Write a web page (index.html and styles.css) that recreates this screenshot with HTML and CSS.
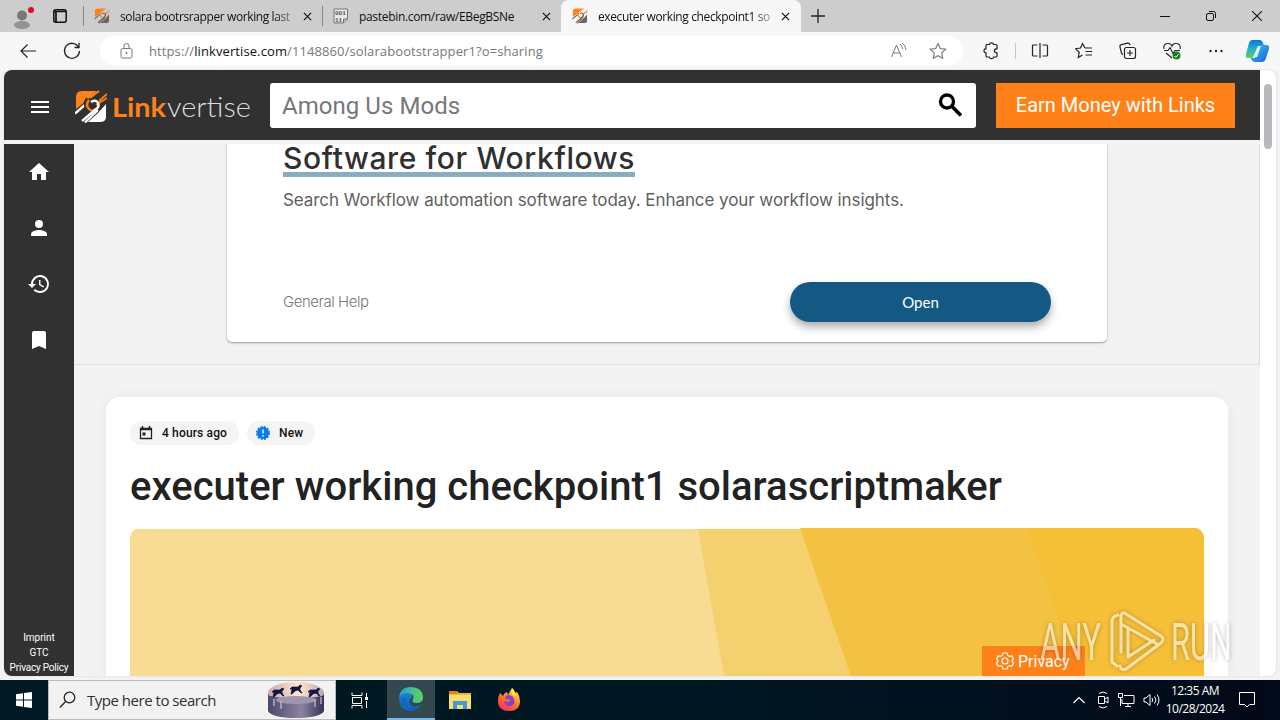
FILE: index.html
```html
<!DOCTYPE html>
<html lang="en">
<head>
    <meta charset="UTF-8">
    <meta name="viewport" content="width=device-width, initial-scale=1.0">
    <title>executer working checkpoint1 solarascriptmaker</title>
    <link rel="stylesheet" href="styles.css">
</head>
<body>
    <svg class="defs" width="0" height="0">
        <symbol id="mark" viewBox="0 0 32 34">
            <path d="M1 7Q1 1 7 1H22L11 11 1 19z" fill="#ff8119"/>
            <path d="M31 14V27Q31 32 25 32H13L23 23z" fill="var(--mark-light)"/>
            <path d="M0 23.500L12 13M10 32.500L23 20" stroke="var(--mark-light)" stroke-width="2.400" fill="none"/>
            <path d="M15 8L24 1M24 11L32 4M21 15L32 8" stroke="#ff8119" stroke-width="1.800"/>
            <path d="M13 9q-4 5 0 9t8-1" stroke="var(--mark-dark)" stroke-width="4.500" fill="none"/>
            <path d="M14 10q-4 5 0 9t7-1" stroke="#ff8119" stroke-width="2.400" fill="none"/>
            <path d="M16 12q5-3 7 1t-3 7l-13 11" stroke="var(--mark-light)" stroke-width="2.400" fill="none"/>
        </symbol>
        <symbol id="close" viewBox="0 0 10 10"><path d="M1 1l8 8M9 1L1 9" stroke="#111" stroke-width="1.3"/></symbol>
    </svg>

    <header class="tabs">
        <div class="profile">
            <svg width="24" height="24" viewBox="0 0 24 24"><circle cx="10" cy="9.500" r="5" fill="#777"/><ellipse cx="10" cy="19" rx="8" ry="4" fill="#929292"/><circle cx="19" cy="4" r="3" fill="#e00b1c"/></svg>
        </div>
        <svg class="workspaces" width="14" height="14" viewBox="0 0 14 14"><rect x=".8" y=".8" width="12.4" height="12.4" rx="2" fill="none" stroke="#111" stroke-width="1.5"/><path d="M1 2.500h12M3 3v10" stroke="#111" stroke-width="1.700"/></svg>
        <div class="tab tab-first">
            <svg class="favicon"><use href="#mark"/></svg>
            <span class="tab-title t1">solara bootrsrapper working last</span>
            <svg class="close"><use href="#close"/></svg>
        </div>
        <div class="tab tab-second">
            <svg class="favicon" viewBox="0 0 16 16"><path d="M1 1h13.500v10l-4 4H1z" fill="#e8e8e8" stroke="#777"/><text x="2" y="7" class="bits">001</text><text x="2" y="13.500" class="bits">11</text><path d="M10.500 15v-4h4" fill="#bbb" stroke="#777"/></svg>
            <span class="tab-title t2">pastebin.com/raw/EBegBSNe</span>
            <svg class="close"><use href="#close"/></svg>
        </div>
        <div class="tab tab-active">
            <svg class="favicon"><use href="#mark"/></svg>
            <span class="tab-title t3">executer working checkpoint1 so</span>
            <svg class="close"><use href="#close"/></svg>
        </div>
        <svg class="new-tab" width="14" height="14"><path d="M7 0v14M0 7h14" stroke="#222" stroke-width="1.3"/></svg>
        <div class="window-buttons">
            <svg width="10" height="10"><path d="M0 5.500h10" stroke="#111"/></svg>
            <svg width="10" height="10"><rect x=".5" y="2.500" width="7" height="7" rx="1.500" fill="none" stroke="#111"/><path d="M3 .5h4.500q2 0 2 2V7" fill="none" stroke="#111"/></svg>
            <svg width="10" height="10"><path d="M0 0l10 10M10 0L0 10" stroke="#111" stroke-width="1.100"/></svg>
        </div>
    </header>

    <nav class="toolbar">
        <svg class="back" width="16" height="16"><path d="M16 8H1M7.500 1.500L1 8l6.500 6.500" fill="none" stroke="#222" stroke-width="1.200"/></svg>
        <svg class="reload" width="18" height="18"><path d="M15.500 5A7.500 7.500 0 1 0 16.500 9M16 1v4.500h-4.500" fill="none" stroke="#222" stroke-width="1.300"/></svg>
        <div class="address">
            <svg width="14" height="16"><rect x="1" y="5.500" width="11" height="9.500" rx="1.500" fill="none" stroke="#777"/><path d="M4 5.500V3q0-2.500 2.500-2.500T9 3v2.500" fill="none" stroke="#777"/><circle cx="6.500" cy="10" r="1" fill="#777"/></svg>
            <span class="url">https://<b>linkvertise.com</b>/1148860/solarabootstrapper1?o=sharing</span>
            <svg class="read" width="18" height="18"><path d="M1.500 15L6.500 3l5 12M3.200 11h6.600M10 2q2.500 2 2.500 5M12 .8q4 3 4 7.200" fill="none" stroke="#777"/></svg>
            <svg class="star" width="18" height="18"><path d="M9 1.500l2.300 5 5.400.7-4 3.700 1 5.400L9 13.700l-4.700 2.600 1-5.400-4-3.700 5.400-.7z" fill="none" stroke="#777" stroke-width="1.100"/></svg>
        </div>
        <div class="tools">
            <svg width="18" height="18"><path d="M5 2.500h2.500q.2-1.700 2-1.700t2 1.700H14q1 0 1 1v3.200q-2.600 0-2.600 2.100t2.600 2.100V14q0 1-1 1h-2.500q-.2 1.700-2 1.700t-2-1.700H5q-1 0-1-1v-3.100q-2 0-2-2.100t2-2.100V3.500q0-1 1-1z" fill="none" stroke="#222" stroke-width="1.200"/></svg>
            <i class="divider"></i>
            <svg width="18" height="18"><path d="M6.500 3H2.500q-1 0-1 1v9q0 1 1 1h4M11.500 3h4q1 0 1 1v9q0 1-1 1h-4M9 1v15" fill="none" stroke="#222" stroke-width="1.200"/></svg>
            <svg width="18" height="18"><path d="M10 6L7.500 1.500 5.500 6l-5 .7 3.700 3.500-.9 5.300 4.200-2.500M10 6h7M10.500 9.500H17M10.500 13H17" fill="none" stroke="#222" stroke-width="1.200"/></svg>
            <svg width="18" height="18"><path d="M4 12.500q-1 0-1.500-1.500L1 5q-.5-2 1.500-2.300l6-1.500q2-.5 2.500 2" fill="none" stroke="#222" stroke-width="1.200"/><rect x="5.500" y="5.500" width="11" height="11" rx="2" fill="none" stroke="#222" stroke-width="1.200"/><path d="M11 8v6M8 11h6" stroke="#222" stroke-width="1.200"/></svg>
            <svg width="18" height="18"><path d="M1 7q-1-5 3.500-5.500Q8 1 9 4q1-3 4.500-2.500Q18 2 17 7M1 8.500h4l2-3 3 6 2-3h5M3 11l6 5" fill="none" stroke="#222" stroke-width="1.100"/><circle cx="13.500" cy="13.500" r="4" fill="#16851d"/><path d="M11.500 14l1.300 1.300 2.700-3" stroke="#fff" fill="none"/></svg>
            <svg width="18" height="18"><g fill="#222"><circle cx="3.500" cy="9" r="1.200"/><circle cx="9" cy="9" r="1.200"/><circle cx="14.500" cy="9" r="1.200"/></g></svg>
            <svg class="copilot" width="24" height="24" viewBox="0 0 24 24">
                <defs><linearGradient id="cp1" x2="0" y2="1"><stop stop-color="#1673d8"/><stop offset=".45" stop-color="#1bafd8"/><stop offset="1" stop-color="#62cf55"/></linearGradient><linearGradient id="cp2" x2="1" y2="1"><stop stop-color="#39c5f4"/><stop offset="1" stop-color="#1561df"/></linearGradient></defs>
                <path d="M7 1h8q2 0 3 3l1 3h-4q-2 0-3 3l-2 6q-1 3-3 3H3q-3 0-2-4L4 4q1-3 3-3z" fill="url(#cp1)"/>
                <path d="M17 6h4q4 0 3 4l-3 9q-1 4-4 4h-7q-3 0-4-4h3q2 0 3-4l2-6q1-3 3-3z" fill="url(#cp2)"/>
                <path d="M13 7h3l-4 11H8z" fill="#effaff"/>
            </svg>
        </div>
    </nav>

    <div class="viewport">
        <div class="page">
            <div class="site-header">
                <svg class="menu" width="18" height="12"><path d="M0 1h18M0 6h18M0 11h18" stroke="#fff" stroke-width="2"/></svg>
                <div class="logo">
                    <svg width="32" height="34"><use href="#mark"/></svg>
                    <svg class="wordmark" width="141" height="34"><text x="1" y="27" textLength="54" lengthAdjust="spacingAndGlyphs" class="link">Link</text><text x="56" y="27" textLength="84" lengthAdjust="spacingAndGlyphs" class="vertise">vertise</text></svg>
                </div>
                <div class="search">
                    <span>Among Us Mods</span>
                    <svg width="24" height="24"><circle cx="9" cy="8.500" r="6.500" fill="none" stroke="#000" stroke-width="3.300"/><path d="M14 13.500l9 9" stroke="#000" stroke-width="3.500"/></svg>
                </div>
                <button class="earn"><span>Earn Money with Links</span></button>
            </div>
            <div class="site-body">
                <aside class="sidebar">
                    <svg viewBox="0 0 24 24"><path d="M10 20v-6h4v6h5v-8h3L12 3 2 12h3v8z" fill="#fff"/></svg>
                    <svg viewBox="0 0 24 24"><circle cx="12" cy="8" r="4" fill="#fff"/><path d="M4 20v-2c0-2.700 5.300-4 8-4s8 1.300 8 4v2z" fill="#fff"/></svg>
                    <svg viewBox="0 0 24 24"><path d="M13 3a9 9 0 0 0-9 9H1l4 4 4-4H6a7 7 0 1 1 2 5l-1.400 1.400A9 9 0 1 0 13 3zm-1 5v5l4.300 2.500.7-1.200-3.500-2.100V8z" fill="#fff"/></svg>
                    <svg viewBox="0 0 24 24"><path d="M17 3H7a2 2 0 0 0-2 2v16l7-3 7 3V5a2 2 0 0 0-2-2z" fill="#fff"/></svg>
                    <div class="legal"><span class="l1">Imprint</span><span class="l2">GTC</span><span class="l3">Privacy Policy</span></div>
                </aside>
                <main class="content">
                    <section class="ad-area">
                        <div class="ad">
                            <h2><span>Software for Workflows</span></h2>
                            <p><span>Search Workflow automation software today. Enhance your workflow insights.</span></p>
                            <div class="ad-footer"><span class="advertiser">General Help</span><button class="open"><span>Open</span></button></div>
                        </div>
                    </section>
                    <section class="article">
                        <div class="chips">
                            <div class="chip"><svg width="14" height="14"><path d="M1.500 2.500h11v10h-11z" fill="none" stroke="#222" stroke-width="1.300"/><path d="M1 3.500h12M3.500 0v3M10.500 0v3" stroke="#222" stroke-width="1.600"/><path d="M3.500 6.500h3v3h-3z" fill="#222"/></svg><span class="age">4 hours ago</span></div>
                            <div class="chip"><svg width="14" height="14"><circle cx="7" cy="7" r="6" fill="#087bf1"/><circle cx="7" cy="7" r="6.200" fill="none" stroke="#087bf1" stroke-width="1.600" stroke-dasharray="2 1.250"/><path d="M7 3.500v4M7 9v1.600" stroke="#fff" stroke-width="1.500"/></svg><span class="new">New</span></div>
                        </div>
                        <h1><span>executer working checkpoint1 solarascriptmaker</span></h1>
                        <svg class="hero" width="1074" height="160">
                            <path d="M0 1h1074v159H0z" fill="#f8dc93"/>
                            <path d="M568 1h110l55 159H596z" fill="#f5d06f"/>
                            <path d="M670 0h404v160H725z" fill="#f3c242"/>
                            <path d="M896 0h178v160H953z" fill="#f6bf38"/>
                        </svg>
                    </section>
                </main>
            </div>
        </div>
        <div class="scrollbar"><div class="thumb"></div></div>
        <div class="privacy"><svg width="18" height="18" viewBox="0 0 18 18"><path d="M7 1h4l.8 2.500 1.500.9 2.600-.5 1.600 3-1.600 2.100 1.600 2.100-1.600 3-2.600-.5-1.500.9L11 17H7l-.8-2.500-1.500-.9-2.600.5-1.600-3L2.100 9 .5 6.900l1.600-3 2.600.5 1.500-.9z" fill="none" stroke="#fff" stroke-width="1.100"/><circle cx="9" cy="9" r="3" fill="none" stroke="#fff" stroke-width="1.100"/></svg><span>Privacy</span></div>
    </div>

    <footer class="taskbar">
        <div class="start"><svg width="16" height="16"><path d="M0 2.300L7 1.200v6.300H0zM8 1l8-1v7.500H8zM0 8.500h7v6.200l-7-1zM8 8.500h8V16l-8-1z" fill="#fff"/></svg></div>
        <div class="task-search">
            <svg width="18" height="18"><circle cx="10.500" cy="6.500" r="5.300" fill="none" stroke="#222" stroke-width="1.300"/><path d="M6.500 10.500L1 16.500" stroke="#222" stroke-width="1.300"/></svg>
            <span>Type here to search</span>
            <svg class="carousel" width="60" height="38" viewBox="0 0 60 38">
                <defs><linearGradient id="drum"><stop stop-color="#4a4a6c"/><stop offset=".6" stop-color="#8e82a0"/><stop offset="1" stop-color="#343456"/></linearGradient><linearGradient id="inside"><stop stop-color="#c7a9ae"/><stop offset=".55" stop-color="#ffe7cc"/><stop offset="1" stop-color="#bba6b4"/></linearGradient></defs>
                <path d="M2 12v18q4 7 28 7t28-7V12z" fill="url(#drum)"/>
                <ellipse cx="30" cy="12" rx="28" ry="11" fill="url(#inside)"/>
                <path d="M2 14q5 3 28 3 23 0 28-3v6q-5 6-28 6T2 20z" fill="url(#drum)"/>
                <ellipse cx="30" cy="19" rx="20" ry="4" fill="#9d96ac"/>
                <path d="M8 18v7M15 20v8M49 18v8M55 16v7" stroke="#d1c3cf" stroke-width="1.200"/>
                <g id="pony"><path d="M6 11l2-2 6 0 2-2 2 1-2 2 0 2 2 3-1 0-3-3-3 1-3 3-1 0 1-5z" fill="#171342" stroke="#171342" stroke-width=".7"/></g>
                <use href="#pony" x="18" y="-3"/><use href="#pony" x="36"/>
            </svg>
        </div>
        <div class="task-icon task-view"><svg width="17" height="17"><path d="M1 .5v3h10v-3M1 16.500v-3h10v3M1.500 5.500h9v6h-9zM15.500 1v4M15.500 9v7" fill="none" stroke="#fff"/><path d="M14 5h3v3h-3z" fill="#fff"/></svg></div>
        <div class="task-icon running"><svg width="24" height="24" viewBox="0 0 24 24"><defs><linearGradient id="edge1" x2="1"><stop stop-color="#229fd8"/><stop offset="1" stop-color="#60d75a"/></linearGradient><linearGradient id="edge2" x2="0" y2="1"><stop stop-color="#1783d2"/><stop offset="1" stop-color="#125bb1"/></linearGradient></defs><path d="M0 11Q1 0 12 0q11 0 12 10 0 6-7 6-5 0-3-4 2-5-4-5-6 0-10 4z" fill="url(#edge1)"/><path d="M0 12q1-6 8-6 6 0 5 5-5 2-1 7 3 3 10 0-4 6-10 6Q1 24 0 12z" fill="url(#edge2)"/><path d="M8 11q-4 8 4 13Q1 23 3 14q1-4 5-3z" fill="#1267bd"/></svg></div>
        <div class="task-icon spaced"><svg width="22" height="20"><path d="M0 2Q0 1 1 1h7l2 2h12v16H0z" fill="#f3b72f"/><path d="M0 5h22v14H0z" fill="#fbdc6f"/><path d="M4 11h14v8h-4v-4H8v4H4z" fill="#3c9add"/><path d="M0 1h8v3H0z" fill="#d88619"/></svg></div>
        <div class="task-icon spaced"><svg width="24" height="24" viewBox="0 0 24 24"><defs><linearGradient id="fire" x1=".8" y1="0" x2=".2" y2="1"><stop stop-color="#fff14a"/><stop offset=".5" stop-color="#ff7b25"/><stop offset="1" stop-color="#f32a63"/></linearGradient></defs><path d="M3 5l3 3q1-3 4-4l1 3 4-7q2 1 3 5l2-1q3 4 3 9 0 10-11 10Q1 23 1 13q0-5 2-8z" fill="url(#fire)"/><path d="M8 9q3-4 8 0 4 8-3 9-5 1-6-5l4 1 3-2-5-1z" fill="#8342cb"/><path d="M15 0q4 4 3 8-5-1-3-8z" fill="#ffe935"/></svg></div>
        <div class="tray">
            <svg width="12" height="8"><path d="M.5 7L6 1.500 11.500 7" fill="none" stroke="#fff" stroke-width="1.200"/></svg>
            <svg class="meet" width="12" height="18"><path d="M2 2.500q4-3 8 0M2 15.500q4 3 8 0M1.500 5.500h6v7h-6zM8 8l3-2v6l-3-2" fill="none" stroke="#fff"/></svg>
            <svg width="17" height="14"><path d="M6 2.500h10v8H4V6M.5.5h4v4h-4zM2.500 5v8M10 11v2.500M7 13.500h6" fill="none" stroke="#fff"/></svg>
            <svg class="sound" width="17" height="14"><path d="M1 5h2l4-3.500v11L3 9H1zM9 5q1.500 2 0 4M11.500 3.500q3 3.500 0 7M14 1.500q4 5.500 0 11" fill="none" stroke="#fff"/></svg>
            <div class="clock"><span class="time">12:35 AM</span><span class="date">10/28/2024</span></div>
            <svg class="notice" width="16" height="16"><path d="M.5.500h15v12h-5L8 15l-2.500-2.500h-5z" fill="none" stroke="#fff"/></svg>
        </div>
    </footer>

    <svg class="watermark" width="210" height="70" viewBox="0 0 210 70">
        <text x="3" y="54" textLength="61" lengthAdjust="spacingAndGlyphs">ANY</text>
        <path d="M80 60l-5-4V16q0-6 6-7M84 46V10q1-5 5-2l35 22q4 3 0 7L89 63q-5 2-6-3M84 18l36 20M91 51l26-17M91 23v28"/>
        <text x="134" y="54" textLength="61" lengthAdjust="spacingAndGlyphs">RUN</text>
    </svg>
</body>
</html>
```
FILE: styles.css
```css
:root {
    --dark: #313131;
    --orange: #ff8119;
    --mark-light: #666;
    --mark-dark: transparent;
    --ui: "Open Sans", "Noto Sans", sans-serif;
}

* {
    box-sizing: border-box;
}

body {
    margin: 0;
    width: 1280px;
    height: 720px;
    overflow: hidden;
    position: relative;
    background: #f3f3f3;
    font-family: Roboto, sans-serif;
    white-space: nowrap;
}

svg {
    display: block;
    flex-shrink: 0;
}

.defs {
    position: absolute;
}

button {
    border: 0;
    padding: 0;
    font-family: inherit;
}

.tabs {
    height: 32px;
    display: flex;
    background: #cdcdcd;
    align-items: center;
    font: 12px var(--ui);
}

.profile {
    width: 52px;
    padding-left: 12px;
}

.profile svg {
    margin-top: 3px;
}

.workspaces {
    margin: 0 16px 0 1px;
}

.tab {
    height: 32px;
    display: flex;
    align-items: center;
    border-left: 1px solid #888;
    border-image: linear-gradient(transparent 20%, #888 20%, #888 80%, transparent 80%) 1;
    padding-left: 10px;
}

.tab-first,
.tab-second {
    width: 239px;
}

.tab-active {
    width: 240px;
    padding-left: 11px;
    background: #f7f7f7;
    border: 0;
    border-radius: 8px 8px 0 0;
}

.favicon {
    width: 16px;
    height: 16px;
    margin-right: 10px;
}

.bits {
    font: bold 6px "Liberation Mono", monospace;
    fill: #555;
}

.tab-title {
    width: 174px;
    overflow: hidden;
    color: #111;
}

.t1 {
    letter-spacing: -.4px;
}

.t2 {
    letter-spacing: -.32px;
}

.t3 {
    letter-spacing: -.38px;
}

.t1,
.t3 {
    -webkit-mask-image: linear-gradient(90deg, #000 88%, rgba(0, 0, 0, .3));
}

.close {
    width: 9px;
    height: 9px;
    margin-left: 9px;
}

.new-tab {
    margin-left: 10px;
}

.window-buttons {
    display: flex;
    gap: 36px;
    margin-left: auto;
    margin-right: 18px;
}

.toolbar {
    height: 38px;
    display: flex;
    align-items: center;
    background: #f7f7f7;
}

.back {
    margin-left: 20px;
}

.reload {
    margin: 0 19px 0 27px;
}

.address {
    height: 30px;
    width: 863px;
    border-radius: 15px;
    background: #fff;
    display: flex;
    align-items: center;
    padding-left: 20px;
    font: 13px var(--ui);
    letter-spacing: .1px;
    color: #777;
}

.url {
    margin-left: 15px;
}

.url b {
    font-weight: 400;
    color: #111;
}

.read {
    margin-left: auto;
}

.star {
    margin: 0 16px 0 21px;
}

.tools {
    flex: 1;
    display: flex;
    align-items: center;
    gap: 26px;
    padding-left: 19px;
}

.divider {
    height: 16px;
    width: 1px;
    margin: 0 -11px 0 -11px;
    background: #c5c5c5;
}

.copilot {
    margin-left: -6px;
}

.viewport {
    position: relative;
    width: 1272px;
    height: 606px;
    margin-left: 4px;
    display: flex;
    overflow: hidden;
    border-radius: 8px;
    background: #fff;
    box-shadow: 0 0 2px #ccc;
}

.page {
    width: 1256px;
    background: #f3f3f3;
}

.site-header {
    height: 70px;
    display: flex;
    align-items: center;
    padding-left: 27px;
    background: var(--dark);
}

.menu {
    margin-top: 4px;
}

.logo {
    --mark-light: #fff;
    --mark-dark: var(--dark);
    display: flex;
    margin: 3px 0 0 26px;
    height: 34px;
}

.logo .wordmark {
    margin-left: 4px;
}

.link {
    font: 700 26px Lato;
    fill: var(--orange);
}

.vertise {
    font: 300 27px Lato;
    fill: #ddd;
}

.search {
    height: 45px;
    width: 706px;
    margin-left: 18px;
    padding: 0 14px 0 12px;
    display: flex;
    align-items: center;
    justify-content: space-between;
    border-radius: 3px;
    background: #fff;
    color: #777;
    font-size: 24px;
    letter-spacing: .05px;
}

.search span {
    padding-top: 2px;
}

.earn {
    width: 239px;
    height: 45px;
    margin-left: 20px;
    background: var(--orange);
    color: #fff;
    font-size: 20px;
}

.site-body {
    height: 532px;
    margin-top: 4px;
    display: flex;
}

.sidebar {
    width: 70px;
    display: flex;
    flex-direction: column;
    align-items: center;
    gap: 32px;
    padding-top: 16px;
    background: var(--dark);
}

.sidebar > svg {
    width: 24px;
    height: 24px;
}

.legal {
    margin-top: auto;
    display: flex;
    flex-direction: column;
    align-items: center;
    color: #fff;
    font-size: 10px;
    line-height: 15px;
    padding-bottom: 1px;
}

.l3 {
    letter-spacing: -.2px;
}

.content {
    width: 1186px;
}

.ad-area {
    height: 221px;
    padding-left: 153px;
    background: #f2f2f2;
    border-right: 1px solid #ddd;
    border-bottom: 1px solid #e2e2e2;
}

.ad {
    height: 198px;
    width: 880px;
    padding: 0 56px;
    background: #fff;
    border-radius: 0 0 5px 5px;
    box-shadow: 0 1px 2px #999;
    font-family: Inter, sans-serif;
    clip-path: inset(0 -4px -4px -4px);
}

.ad h2 {
    margin: 0;
    height: 33px;
    font-size: 30px;
    font-weight: 500;
    line-height: 28px;
    letter-spacing: .62px;
    color: #303030;
}

.ad h2 span {
    display: inline-block;
    height: 33px;
    border-bottom: 5px solid #8aacc0;
}

.ad p {
    margin: 12px 0 0;
    font-size: 17px;
    line-height: 22px;
    letter-spacing: -.07px;
    color: #5f5f5f;
}

.ad-footer {
    margin-top: 71px;
    height: 40px;
    display: flex;
    align-items: center;
    justify-content: space-between;
}

.advertiser {
    margin-top: -2px;
    font: 300 15px Inter, sans-serif;
    letter-spacing: -.45px;
    color: #777;
}

.open {
    width: 261px;
    height: 40px;
    border-radius: 20px;
    background: #135983;
    color: #fff;
    font: 15px Lato, sans-serif;
    box-shadow: 0 5px 9px rgba(0, 0, 0, .32);
}

.article {
    width: 1122px;
    height: 290px;
    margin: 32px 0 0 32px;
    padding: 24px;
    background: #fff;
    border-radius: 14px 14px 0 0;
    box-shadow: 0 0 16px rgba(0, 0, 0, .05);
}

.chips {
    display: flex;
    gap: 8px;
}

.chip {
    height: 24px;
    display: flex;
    align-items: center;
    gap: 9px;
    padding: 0 12px 0 9px;
    border-radius: 12px;
    background: #f4f4f4;
    color: #111;
    font-size: 12px;
    font-weight: 500;
    letter-spacing: .15px;
}

h1 {
    margin: 17px 0 16px;
    font-size: 40px;
    line-height: 50px;
    font-weight: 500;
    letter-spacing: .02px;
    color: #222;
}

.hero {
    border-radius: 10px 10px 0 0;
}

.scrollbar {
    width: 16px;
    padding: 14px 4px;
}

.thumb {
    width: 8px;
    height: 65px;
    border-radius: 4px;
    background: #b9b9bd;
}

.privacy {
    position: absolute;
    left: 978px;
    bottom: 0;
    width: 103px;
    height: 30px;
    display: flex;
    align-items: center;
    gap: 4px;
    padding-left: 14px;
    background: var(--orange);
    color: #fff;
    font-size: 16px;
}

.taskbar {
    height: 40px;
    margin-top: 4px;
    display: flex;
    background: linear-gradient(90deg, #001922, #001722 55%, #020918);
    color: #fff;
}

.start,
.task-icon {
    width: 48px;
    display: grid;
    place-items: center;
}

.task-view {
    margin-right: 3px;
    padding-right: 1px;
}

.running {
    background: #344850;
    border-bottom: 2px solid #79b9ed;
}

.spaced {
    margin-left: 1px;
}

.task-search {
    width: 288px;
    display: flex;
    align-items: center;
    padding-left: 10px;
    background: #f2f2f2;
    border: 1px solid #bbb;
    color: #303030;
    font: 15px var(--ui);
    letter-spacing: -.48px;
}

.task-search span {
    margin-left: 10px;
}

.carousel {
    margin: 0 9px 0 auto;
}

.tray {
    margin-left: auto;
    margin-right: 25px;
    display: flex;
    align-items: center;
    gap: 9px;
}

.meet {
    margin-left: 3px;
}

.sound {
    margin-left: -1px;
}

.clock {
    width: 58px;
    margin-left: -3px;
    display: flex;
    flex-direction: column;
    align-items: center;
    font: 12px/18px var(--ui);
    letter-spacing: -.5px;
}

.notice {
    margin-left: 6px;
}

.watermark {
    position: absolute;
    left: 1037px;
    top: 606px;
    opacity: .55;
    filter: drop-shadow(0 0 2px rgba(0, 0, 0, .5));
    font: 52px Roboto, sans-serif;
    fill: #fff;
}

.watermark path {
    fill: none;
    stroke: #fff;
    stroke-width: 3;
    stroke-linecap: round;
    stroke-linejoin: round;
}
```
